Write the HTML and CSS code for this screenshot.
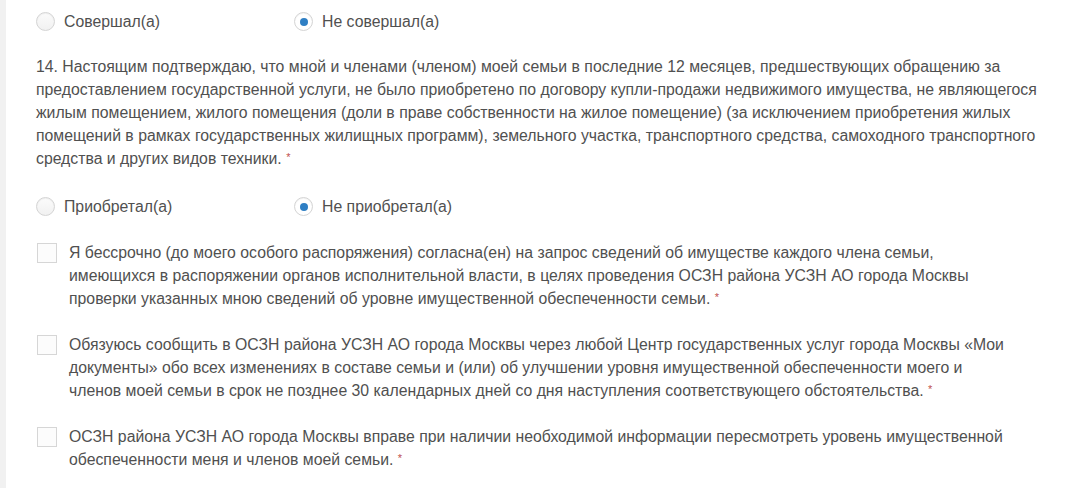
FILE: index.html
```html
<!DOCTYPE html>
<html lang="ru">
<head>
<meta charset="utf-8">
<link rel="stylesheet" href="styles.css">
</head>
<body>
<div class="page">
  <div class="radio-row first">
    <label class="radio"><span class="dot"></span><span>Совершал(а)</span></label>
    <label class="radio"><span class="dot on"></span><span>Не совершал(а)</span></label>
  </div>
  <p class="question">14. Настоящим подтверждаю, что мной и членами (членом) моей семьи в последние 12 месяцев, предшествующих обращению за предоставлением государственной услуги, не было приобретено по договору купли-продажи недвижимого имущества, не являющегося жилым помещением, жилого помещения (доли в праве собственности на жилое помещение) (за исключением приобретения жилых помещений в рамках государственных жилищных программ), земельного участка, транспортного средства, самоходного транспортного средства и других видов техники. <span class="req">*</span></p>
  <div class="radio-row second">
    <label class="radio"><span class="dot"></span><span>Приобретал(а)</span></label>
    <label class="radio"><span class="dot on"></span><span>Не приобретал(а)</span></label>
  </div>
  <div class="check">
    <span class="box"></span>
    <p>Я бессрочно (до моего особого распоряжения) согласна(ен) на запрос сведений об имуществе каждого члена семьи, имеющихся в распоряжении органов исполнительной власти, в целях проведения ОСЗН района УСЗН АО города Москвы проверки указанных мною сведений об уровне имущественной обеспеченности семьи. <span class="req">*</span></p>
  </div>
  <div class="check">
    <span class="box"></span>
    <p>Обязуюсь сообщить в ОСЗН района УСЗН АО города Москвы через любой Центр государственных услуг города Москвы «Мои документы» обо всех изменениях в составе семьи и (или) об улучшении уровня имущественной обеспеченности моего и членов моей семьи в срок не позднее 30 календарных дней со дня наступления соответствующего обстоятельства. <span class="req">*</span></p>
  </div>
  <div class="check">
    <span class="box"></span>
    <p>ОСЗН района УСЗН АО города Москвы вправе при наличии необходимой информации пересмотреть уровень имущественной обеспеченности меня и членов моей семьи. <span class="req">*</span></p>
  </div>
</div>
</body>
</html>
```

FILE: styles.css
```css
html, body {
  margin: 0;
  padding: 0;
  background: #fff;
}
body {
  font-family: "Liberation Sans", Arial, sans-serif;
  font-size: 15.8px;
  line-height: 23px;
  color: #505050;
}
.page {
  border-left: 6px solid #f1f1f1;
  min-height: 488px;
  box-sizing: border-box;
  padding: 10px 18px 0 30px;
}
.radio-row {
  display: grid;
  grid-template-columns: 258px 258px;
  height: 23px;
}
.radio-row.second {
  margin-top: 25px;
}
.radio {
  display: flex;
  align-items: center;
  gap: 9px;
}
.dot {
  width: 17px;
  height: 17px;
  border: 1px solid #d4d4d4;
  border-radius: 50%;
  box-sizing: content-box;
  background: linear-gradient(#fbfbfb, #f1f1f1);
  box-shadow: inset 0 1px 1px rgba(0,0,0,0.05);
  display: flex;
  align-items: center;
  justify-content: center;
  flex: none;
}
.dot.on {
  background: #fff;
}
.dot.on::after {
  content: "";
  width: 8px;
  height: 8px;
  border-radius: 50%;
  background: #2f7fc4;
}
.question {
  margin: 22px 0 0 0;
}
.req {
  color: #c0504d;
  font-size: 11px;
  vertical-align: 3px;
  line-height: 1;
}
.check {
  display: flex;
  gap: 12px;
  margin-top: 23px;
}
.check .box {
  flex: none;
  width: 18px;
  height: 18px;
  border: 1px solid #d6d6d6;
  background: #fcfcfc;
  margin-top: 2px;
  margin-left: 1px;
}
.check p {
  margin: 0;
  max-width: 940px;
}
```
